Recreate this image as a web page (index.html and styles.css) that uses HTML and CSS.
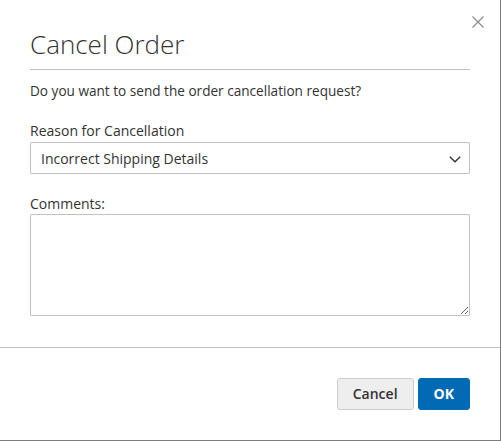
FILE: index.html
```html
<!DOCTYPE html>
<html lang="en">
<head>
<meta charset="utf-8">
<title>Cancel Order</title>
<link rel="stylesheet" href="styles.css">
</head>
<body>
<div class="modal">
  <button class="close" type="button" aria-label="Close">
    <svg width="12" height="12" viewBox="0 0 12 12"><path d="M0.5 0.5 L11.5 11.5 M11.5 0.5 L0.5 11.5" stroke="#8a8a8a" stroke-width="1.2" fill="none"/></svg>
  </button>
  <div class="header">
    <h1 class="title">Cancel Order</h1>
  </div>
  <div class="content">
    <p class="question">Do you want to send the order cancellation request?</p>
    <label class="label" for="reason">Reason for Cancellation</label>
    <div class="select-wrap">
      <select id="reason" class="select">
        <option>Incorrect Shipping Details</option>
      </select>
      <svg class="chevron" width="12" height="7" viewBox="0 0 12 7"><path d="M0.8 0.8 L6 5.8 L11.2 0.8" stroke="#333" stroke-width="1.4" fill="none"/></svg>
    </div>
    <label class="label label-comments" for="comments">Comments:</label>
    <textarea id="comments" class="textarea"></textarea>
  </div>
  <div class="footer">
    <button class="btn btn-secondary" type="button">Cancel</button>
    <button class="btn btn-primary" type="button">OK</button>
  </div>
</div>
</body>
</html>
```
FILE: styles.css
```css
html, body {
  margin: 0;
  padding: 0;
  background: #fff;
}
body {
  font-family: "Open Sans", "Liberation Sans", sans-serif;
  color: #333;
  font-size: 14px;
}
.modal {
  position: relative;
  width: 500px;
  height: 440px;
  border-right: 1px solid #7d7d7d;
  border-bottom: 1px solid #7d7d7d;
  background: #fff;
  display: flex;
  flex-direction: column;
}
.close {
  position: absolute;
  top: 16px;
  right: 16px;
  width: 12px;
  height: 12px;
  padding: 0;
  border: 0;
  background: none;
  display: block;
}
.close svg { display: block; }
.header {
  flex-shrink: 0;
  margin: 0 30px;
  padding: 28px 0 9px;
  border-bottom: 1px solid #c1c1c1;
}
.title {
  margin: 0;
  font-size: 26px;
  font-weight: 300;
  line-height: 32px;
  color: #333;
}
.content {
  flex-shrink: 0;
  padding: 11px 30px 31px;
  display: flex;
  flex-direction: column;
}
.question {
  margin: 0;
  font-size: 13.6px;
  line-height: 20px;
}
.label {
  margin-top: 20px;
  line-height: 20px;
  display: block;
}
.select-wrap {
  position: relative;
  margin-top: 1px;
}
.select {
  appearance: none;
  -webkit-appearance: none;
  width: 100%;
  height: 32px;
  box-sizing: border-box;
  border: 1px solid #c2c2c2;
  border-radius: 1px;
  background: #fff;
  padding: 0 30px 0 10px;
  font-family: inherit;
  font-size: 14px;
  color: #333;
  display: block;
  outline: none;
}
.chevron {
  position: absolute;
  right: 9px;
  top: 14px;
  pointer-events: none;
}
.label-comments {
  margin-top: 20px;
}
.textarea {
  display: block;
  width: 100%;
  height: 102px;
  box-sizing: border-box;
  border: 1px solid #c2c2c2;
  border-radius: 1px;
  margin: 0;
  padding: 5px 10px;
  font-family: inherit;
  font-size: 14px;
  resize: both;
  outline: none;
}
.footer {
  flex-shrink: 0;
  border-top: 1px solid #c1c1c1;
  padding: 30px;
  display: flex;
  justify-content: flex-end;
  gap: 4px;
}
.btn {
  font-family: inherit;
  font-size: 14px;
  font-weight: 600;
  line-height: 16px;
  padding: 7px 15px;
  border-radius: 3px;
  cursor: pointer;
  height: 32px;
  box-sizing: border-box;
}
.btn-secondary {
  background: #eeeeee;
  border: 1px solid #cdcdcd;
  color: #333;
}
.btn-primary {
  background: #006bb4;
  border: 1px solid #006bb4;
  color: #fff;
  font-weight: 700;
}
```
